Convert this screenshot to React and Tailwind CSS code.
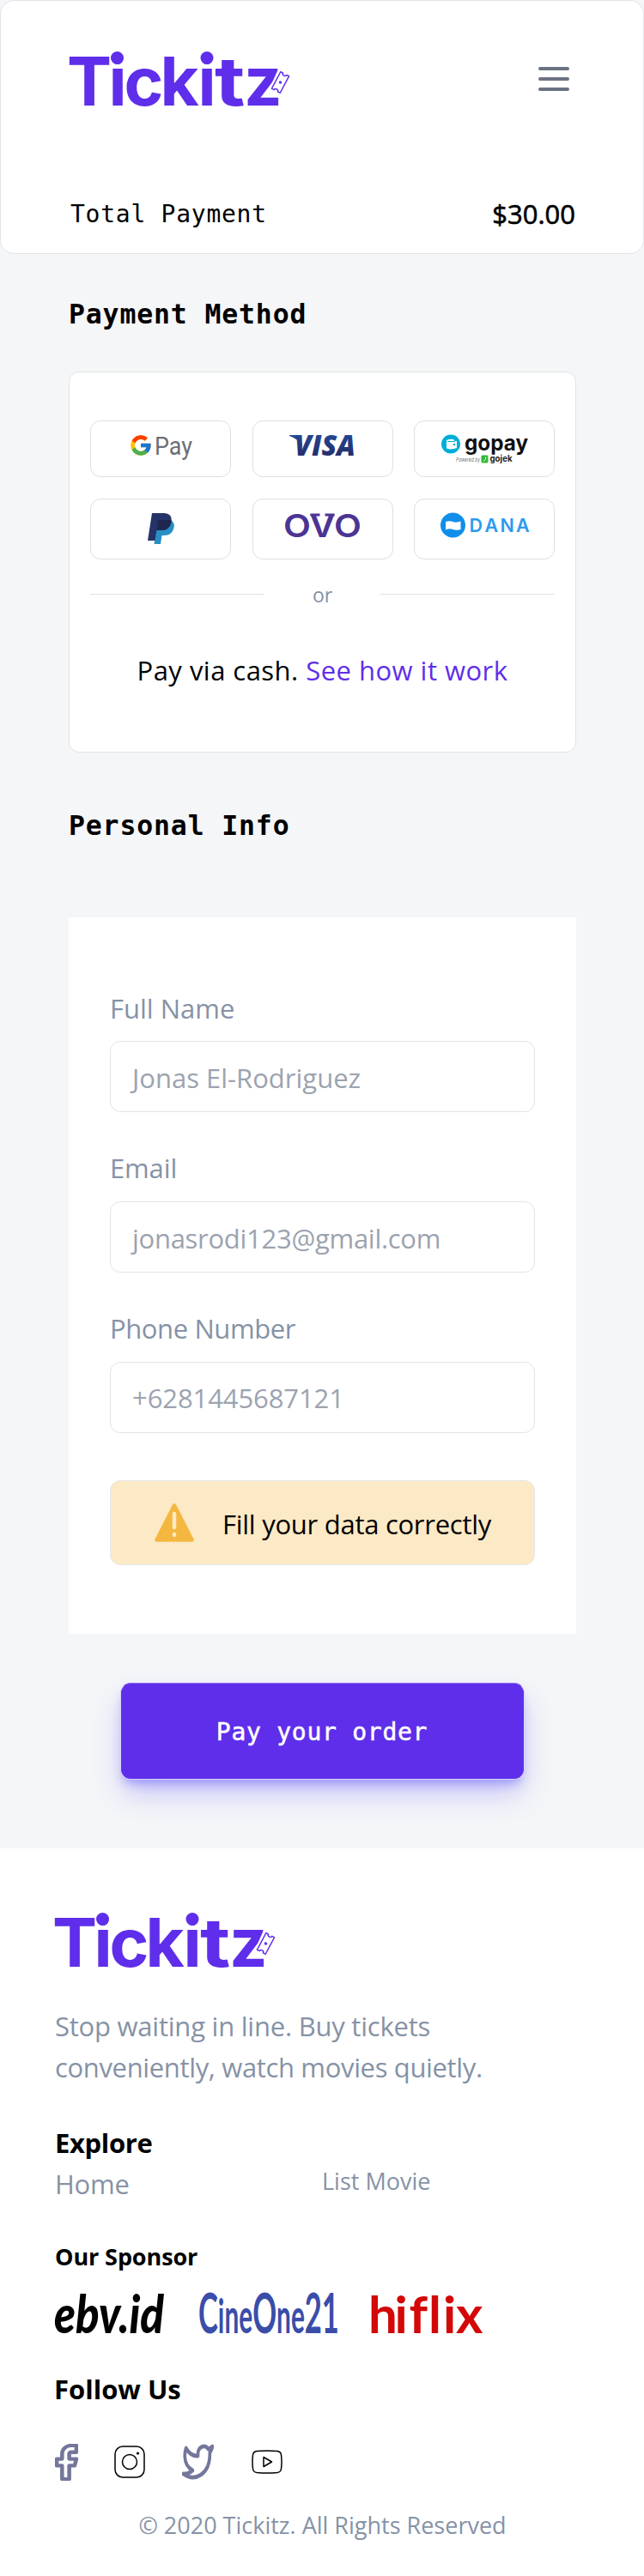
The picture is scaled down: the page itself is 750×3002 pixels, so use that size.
import { FcGoogle } from "react-icons/fc";

function TickitzLogo() {
  return (
    <svg width="258" height="64" viewBox="0 0 258 64" className="block overflow-visible" fill="#5f2eea">
      <g fontFamily="Inter, sans-serif" fontWeight="700" fontSize="78">
        <text y="62.5" x="-3 45.5 63.5 105.5 149.5">Ticki</text>
        <text transform="translate(169 62.5) scale(1.24 1)" x="0" y="0">t</text>
        <text x="203" y="62.5">z</text>
      </g>
      <circle cx="55.5" cy="7.5" r="7.5" />
      <circle cx="160" cy="7.5" r="7.5" />
      <path d="M245 16l9 4-11 29-11-4z" fill="#fff" />
      <g transform="translate(245.5 36) rotate(28)" fill="none" stroke="#5f2eea" strokeWidth="1.5">
        <path d="M-5.5 -11h3a2.5 2 0 0 0 5 0h3v22h-3a2.5 2 0 0 0 -5 0h-3z" />
        <circle r="1" />
      </g>
    </svg>
  );
}

function MenuIcon() {
  return (
    <svg width="36" height="28" viewBox="0 0 36 28" fill="none" stroke="#6b7280" strokeWidth="4" strokeLinecap="round">
      <path d="M2 2h32M2 14h32M2 26h32" />
    </svg>
  );
}

function GooglePay() {
  return (
    <div className="flex items-start gap-1">
      <FcGoogle className="-mt-0.5 size-7" />
      <svg width="42" height="28" viewBox="0 0 42 28" className="overflow-visible" fill="#6b6f75">
        <text x="-2" y="23" fontFamily="Roboto, sans-serif" fontSize="29" textLength="44" lengthAdjust="spacingAndGlyphs">Pay</text>
      </svg>
    </div>
  );
}

function Visa() {
  return (
    <svg width="77" height="24" viewBox="0 0 77 24" className="overflow-visible">
      <defs>
        <linearGradient id="visa" x1="0" y1="1" x2="0" y2="0">
          <stop offset="0" stopColor="#252560" />
          <stop offset="1" stopColor="#2350a0" />
        </linearGradient>
      </defs>
      <path d="M0 0h9q3 0 4 4l2 9Q10 4 0 1z" fill="url(#visa)" />
      <text x="6" y="23.5" fill="url(#visa)" fontFamily="Open Sans, sans-serif" fontWeight="800" fontStyle="italic" fontSize="33" textLength="71" lengthAdjust="spacingAndGlyphs">VISA</text>
    </svg>
  );
}

function GoPay() {
  return (
    <svg width="101" height="33" viewBox="0 0 101 33" className="overflow-visible">
      <circle cx="11" cy="10.5" r="11" fill="#00aed6" />
      <path d="M6 6q5-2 9-.5l.3 1.5H18v8q-6 2.500-12 .5z" fill="#fff" />
      <path d="M7 7.500h9" stroke="#00aed6" strokeWidth="1" />
      <circle cx="15" cy="11" r="1.300" fill="#00aed6" />
      <text x="27" y="18" fill="#111" fontFamily="Inter, sans-serif" fontWeight="700" fontSize="24.500" textLength="74" lengthAdjust="spacingAndGlyphs">gopay</text>
      <text x="17" y="30.500" fill="#777" fontFamily="Inter, sans-serif" fontStyle="italic" fontSize="6.500" textLength="28" lengthAdjust="spacingAndGlyphs">Powered by</text>
      <rect x="46.500" y="23.500" width="8" height="9" rx="1.500" fill="#2fb834" />
      <path d="M49 30.500q3-1.500 3-5" stroke="#fff" strokeWidth="1" fill="none" />
      <text x="56.500" y="31" fill="#222" fontFamily="Inter, sans-serif" fontWeight="700" fontSize="10" textLength="26" lengthAdjust="spacingAndGlyphs">gojek</text>
    </svg>
  );
}

function PayPal() {
  return (
    <svg width="31" height="36" viewBox="0 0 31 36">
      <path d="M12 8h15q5 3.500 3.500 9Q28.500 26 19 26h-2.500L15 36H7.500z" fill="#2790c3" />
      <path d="M5 0h15q9 1 7.500 10Q25.500 20 15.500 20h-5L8.500 32H0z" fill="#253368" />
      <path d="M12 8h15.300q.6 1 .2 3Q25.500 20 15.500 20h-5z" fill="#1f264f" />
    </svg>
  );
}

function Ovo() {
  return (
    <svg width="87" height="28" viewBox="0 0 87 28" className="overflow-visible" fill="#4c3494">
      <text x="-2" y="27.500" fontFamily="Inter, sans-serif" fontWeight="600" fontSize="37.500" textLength="91" lengthAdjust="spacingAndGlyphs">OVO</text>
      <path d="M29.500 .5h11v3h-11zM46.500 .5h11v3h-11z" />
    </svg>
  );
}

function Dana() {
  return (
    <svg width="103" height="28" viewBox="0 0 103 28" className="overflow-visible">
      <circle cx="14.500" cy="14" r="14.500" fill="#118eea" />
      <path d="M6 10q4.500-1.500 8.500 0t9-.5v9.500q-4.500 1.500-9 0t-8.500 .5z" fill="#fff" />
      <text x="33.500 51.500 69.500 88" y="21.500" fill="#2d9bee" fontFamily="Inter, sans-serif" fontWeight="600" fontSize="21.500">DANA</text>
    </svg>
  );
}

const methods = [GooglePay, Visa, GoPay, PayPal, Ovo, Dana];

function Field({ label, placeholder, labelClass = "", inputClass = "" }) {
  return (
    <div>
      <div className={"h-12 leading-[48px] text-[#8692a6] " + labelClass}>{label}</div>
      <div className={"mt-[15px] h-[83px] rounded-xl border border-[#e2e4e9] pl-[25px] leading-[48px] text-[#9ca3af] " + inputClass}>
        {placeholder}
      </div>
    </div>
  );
}

function Sponsors() {
  return (
    <div className="mt-[22px] flex h-12 gap-[41px]">
      <svg width="127" height="48" viewBox="0 0 127 48" className="overflow-visible">
        <text x="-1" y="47" fill="#000" fontFamily="Lato, sans-serif" fontWeight="900" fontStyle="italic" fontSize="60" textLength="128" lengthAdjust="spacingAndGlyphs">ebv.id</text>
      </svg>
      <svg width="160" height="48" viewBox="0 0 160 48" className="overflow-visible" fill="#3a4da8" fontFamily="Lato, sans-serif" fontWeight="700">
        <text transform="translate(-1 46.500) scale(.532 1)" x="0" y="0" fontSize="65">
          C<tspan fontSize="56">ine</tspan>O<tspan fontSize="56">ne</tspan>21
        </text>
      </svg>
      <svg width="127" height="48" viewBox="0 0 127 48" className="overflow-visible">
        <text x="-4 26.500 43.500 66 83 98" y="47" fill="#d30808" fontFamily="Lato, sans-serif" fontWeight="700" fontSize="60">hiflix</text>
      </svg>
    </div>
  );
}

function Socials() {
  return (
    <div className="mt-[39px] flex h-11 items-center">
      <svg width="27" height="43" viewBox="6 1 13 22" preserveAspectRatio="none" fill="none" stroke="#74779b" strokeWidth="2.200" strokeLinejoin="round">
        <path d="M18 2h-3a5 5 0 0 0-5 5v3H7v4h3v8h4v-8h3l1-4h-4V7a1 1 0 0 1 1-1h3z" />
      </svg>
      <svg width="36" height="38" viewBox="0 0 36 38" className="ml-[42px]" fill="none" stroke="#000" strokeWidth="1.5">
        <rect x="1" y="1" width="34" height="36" rx="9" />
        <circle cx="18" cy="19" r="8.500" />
        <circle cx="27.500" cy="9" r="1.600" fill="#000" stroke="none" />
      </svg>
      <svg width="37" height="43" viewBox="0 1.500 24 21.500" preserveAspectRatio="none" className="ml-[43px]" fill="none" stroke="#74779b" strokeWidth="2.400" strokeLinejoin="round">
        <path d="M23 3a10.900 10.900 0 0 1-3.140 1.530 4.480 4.480 0 0 0-7.860 3v1A10.660 10.660 0 0 1 3 4s-4 9 5 13a11.640 11.640 0 0 1-7 2c9 5 20 0 20-11.500a4.500 4.500 0 0 0-.08-.83A7.720 7.720 0 0 0 23 3z" />
      </svg>
      <svg width="36" height="28" viewBox="0 0 36 28" className="ml-[44px]" fill="none" stroke="#000" strokeWidth="1.5" strokeLinejoin="round">
        <path d="M6 1.500Q18 .3 30 1.500Q34 2 34.500 6Q35.500 14 34.500 22Q34 26 30 26.500Q18 27.700 6 26.500Q2 26 1.500 22Q.5 14 1.500 6Q2 2 6 1.500z" />
        <path d="M14 8.500v11l9.500-5.500z" />
      </svg>
    </div>
  );
}

export default function App() {
  return (
    <div className="h-[3002px] w-[750px] bg-[#f5f6f8] font-['Open_Sans',sans-serif] text-[31px] text-black">
      <header className="h-[296px] rounded-2xl border border-[#e2e4e9] bg-white px-[79px] pt-[59px]">
        <div className="flex h-16 items-center justify-between pl-px pr-[7px]">
          <TickitzLogo />
          <MenuIcon />
        </div>
        <div className="mt-[101px] flex h-12 justify-between leading-[48px]">
          <span className="ml-0.5 pt-px font-['DejaVu_Sans_Mono',monospace] text-[28px] tracking-[0.74px]">Total Payment</span>
          <span className="[-webkit-text-stroke:0.6px_black]">$30.00</span>
        </div>
      </header>

      <main className="px-20">
        <h1 className="mt-[46px] h-12 font-['DejaVu_Sans_Mono',monospace] text-[31.5px] font-bold leading-[48px] tracking-[0.84px]">
          Payment Method
        </h1>
        <section className="mt-[43px] h-[444px] w-[591px] rounded-xl border border-[#e2e3e5] bg-white px-6 pt-14">
          <div className="grid grid-cols-3 grid-rows-[66px_71px] gap-[24.5px]">
            {methods.map((Logo, i) => (
              <div key={i} className="flex items-start justify-center rounded-xl border border-[#dfdfe0] pt-4">
                <Logo />
              </div>
            ))}
          </div>
          <div className="mt-[23px] flex h-9 items-center justify-between">
            <div className="h-px w-[203px] bg-[#dfe1e7]" />
            <span className="text-[23px] leading-9 text-[#8692a6]">or</span>
            <div className="h-px w-[203px] bg-[#dfe1e7]" />
          </div>
          <p className="mt-[46px] text-center leading-[48px] tracking-[0.47px]">
            Pay via cash. <span className="text-[#5f2eea]">See how it work</span>
          </p>
        </section>

        <h1 className="mt-[61px] h-12 font-['DejaVu_Sans_Mono',monospace] text-[31.5px] font-bold leading-[48px] tracking-[0.84px]">
          Personal Info
        </h1>
        <section className="mt-[83px] h-[835px] w-[591px] bg-white px-12 pt-[81px]">
          <div className="flex flex-col gap-[41px]">
            <Field label="Full Name" placeholder="Jonas El-Rodriguez" labelClass="pt-px" inputClass="pt-[18px]" />
            <Field label="Email" placeholder="jonasrodi123@gmail.com" labelClass="tracking-[-0.15px]" inputClass="pt-[18px] tracking-[-0.28px]" />
            <Field label="Phone Number" placeholder="+6281445687121" labelClass="tracking-[-0.4px]" inputClass="pt-[17px] tracking-[-0.1px]" />
          </div>
          <div className="mt-[55px] flex h-[99px] items-start rounded-xl border border-[#e5e7eb] bg-[#fce9c6] pl-[51px] pt-[26px]">
            <svg width="46" height="45" viewBox="0 0 46 45">
              <path d="M23 2.500L43.500 42.500H2.500z" fill="#f4b740" stroke="#f4b740" strokeWidth="4.500" strokeLinejoin="round" />
              <path d="M23 12v16M23 36v1" stroke="#fce9c6" strokeWidth="4.500" strokeLinecap="round" />
            </svg>
            <span className="ml-[33px] leading-[48px] tracking-[-0.27px]">Fill your data correctly</span>
          </div>
        </section>

        <button className="mx-auto mt-[57px] flex h-[113px] w-[471px] items-center justify-center rounded-xl border border-[#d9d6fa] border-t-[#8f73ee] bg-[#5f2eea] pt-0.5 font-['DejaVu_Sans_Mono',monospace] text-[28px] leading-[48px] tracking-[0.74px] text-white shadow-[0_8px_12px_-4px_rgba(88,80,250,0.42),0_18px_34px_-4px_rgba(88,80,250,0.34)] [-webkit-text-stroke:0.5px_white]">
          Pay your order
        </button>
      </main>

      <footer className="mt-20 h-[848px] bg-white px-16 pt-[75px]">
        <TickitzLogo />
        <p className="mt-[44px] leading-[48px] text-[#8692a6]">
          <span className="block tracking-[-0.23px]">Stop waiting in line. Buy tickets</span>
          <span className="block tracking-[-0.35px]">conveniently, watch movies quietly.</span>
        </p>
        <h2 className="mt-10 font-bold leading-[48px] tracking-[-0.35px]">Explore</h2>
        <nav className="grid grid-cols-2 text-[#8692a6]">
          <a className="leading-[48px] tracking-[-0.25px]">Home</a>
          <a className="pt-px text-[27px] leading-10">List Movie</a>
        </nav>
        <h2 className="mt-10 pt-px text-[27px] font-bold leading-10 tracking-[-0.1px]">Our Sponsor</h2>
        <Sponsors />
        <h2 className="-ml-px mt-10 font-bold leading-[48px]">Follow Us</h2>
        <Socials />
        <p className="mt-[32px] pl-px text-center text-[27px] leading-10 text-[#8692a6]">© 2020 Tickitz. All Rights Reserved</p>
      </footer>
    </div>
  );
}
